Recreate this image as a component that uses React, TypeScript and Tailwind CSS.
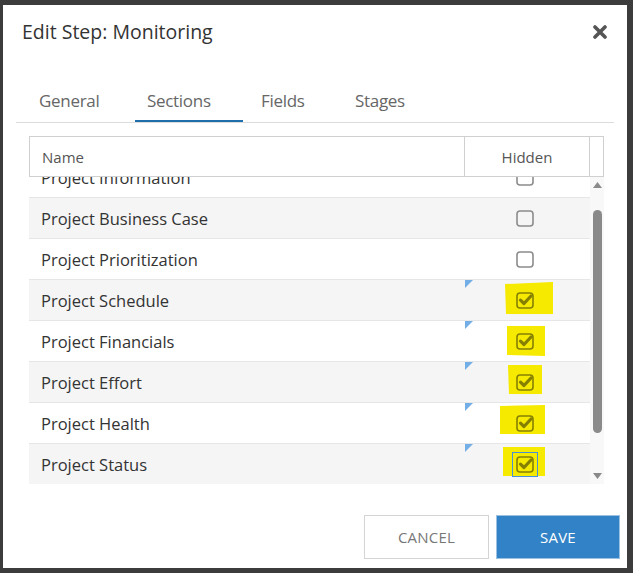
import { useState } from 'react'

const tabs = [
  { label: 'General', width: 'w-[108px]' },
  { label: 'Sections', width: 'w-[114px]' },
  { label: 'Fields', width: 'w-[94px]' },
  { label: 'Stages', width: 'w-[100px]' },
]

// highlight marks drawn over the checked boxes (cell-relative coords)
const rows = [
  { name: 'Project Information', checked: false },
  { name: 'Project Business Case', checked: false },
  { name: 'Project Prioritization', checked: false },
  { name: 'Project Schedule', checked: true, mark: '40,4 88,2 88,34 41,34' },
  { name: 'Project Financials', checked: true, mark: '42,5 80,5 80,35 42,34' },
  { name: 'Project Effort', checked: true, mark: '43,3 77,3 77,32 44,32' },
  { name: 'Project Health', checked: true, mark: '35,3 80,2 80,31 35,31' },
  { name: 'Project Status', checked: true, mark: '38,3 80,3 80,32 38,32', focus: true },
]

const CheckBox = ({ checked, focus }: { checked: boolean; focus?: boolean }) => (
  <div className={focus ? 'relative outline outline-1 outline-[#4a90d9] outline-offset-[3px]' : 'relative'}>
    <svg width="18" height="17" viewBox="0 0 18 17" className="block">
      <rect
        x="1"
        y="1"
        width="16"
        height="15"
        rx="3"
        fill="none"
        stroke={checked ? '#858000' : '#8c8c8c'}
        strokeWidth="1.6"
      />
      {checked && (
        <path d="M4.5 8.2 L8 11.5 L15 4" fill="none" stroke="#858000" strokeWidth="3.2" strokeLinecap="round" strokeLinejoin="round" />
      )}
    </svg>
  </div>
)

export default function App() {
  const [active, setActive] = useState(1)

  return (
    <div className="h-[573px] w-[633px] bg-[#3c3c3c] pb-[5px] pl-[3px] pr-[6px] pt-[5px] font-['Open_Sans',sans-serif]">
      <div className="flex h-full flex-col bg-white">
        <div className="flex h-[54px] items-center justify-between pl-[19px] pr-[20px]">
          <h1 className="text-[19.5px] text-[#333]">Edit Step: Monitoring</h1>
          <svg width="14" height="14" viewBox="0 0 14 14">
            <path d="M2 2 L12 12 M12 2 L2 12" stroke="#555" strokeWidth="3.6" strokeLinecap="round" />
          </svg>
        </div>

        <div className="mx-[13px] mt-[17px] flex h-[47px] border-b border-[#dcdcdc] pl-[11px]">
          {tabs.map((tab, i) => (
            <button
              key={tab.label}
              onClick={() => setActive(i)}
              className={`${tab.width} flex flex-col items-start`}
            >
              <span className="h-[45px] pl-[12px] pt-[12px] text-[17px] tracking-[-0.3px] text-[#666]">{tab.label}</span>
              {i === active && <span className="h-[2px] w-[108px] bg-[#1f6fab]" />}
            </button>
          ))}
        </div>

        <div className="ml-[26px] mr-[23px] mt-[13px] flex flex-col">
          <div className="flex h-[41px] border border-[#d0d0d0] text-[15px] text-[#555]">
            <div className="flex flex-1 items-center pl-[12px] pt-[1px]">Name</div>
            <div className="flex w-[125px] items-center justify-center border-l border-[#d0d0d0] pt-[1px]">Hidden</div>
            <div className="w-[14px] border-l border-[#d0d0d0]" />
          </div>

          <div className="flex h-[307px] overflow-hidden">
            <div className="flex-1 overflow-hidden">
              <div className="-mt-[21px]">
                {rows.map((row, i) => (
                  <div
                    key={row.name}
                    className={`flex h-[41px] border-t border-[#e6e6e6] ${i % 2 === 1 ? 'bg-[#f5f5f5]' : 'bg-white'}`}
                  >
                    <div className="flex flex-1 items-center pl-[12px] pt-[3px] text-[16.5px] text-[#333]">{row.name}</div>
                    <div className="relative flex w-[125px] items-center justify-center pr-[6px]">
                      {row.checked && (
                        <>
                          <svg className="absolute left-0 top-0" width="125" height="40">
                            <polygon points={row.mark} fill="#f6ea00" />
                          </svg>
                          <svg className="absolute left-0 top-0" width="8" height="8">
                            <polygon points="0,0 8,0 0,8" fill="#74aee6" />
                          </svg>
                        </>
                      )}
                      <CheckBox checked={row.checked} focus={row.focus} />
                    </div>
                  </div>
                ))}
              </div>
            </div>
            <div className="flex w-[14px] flex-col items-center bg-[#f8f8f8] pt-[5px]">
              <svg width="9" height="6" viewBox="0 0 9 6">
                <polygon points="4.5,0 9,6 0,6" fill="#8a8a8a" />
              </svg>
              <div className="mt-[22px] h-[223px] w-[9px] rounded-full bg-[#8a8a8a]" />
              <div className="flex-1" />
              <svg width="9" height="6" viewBox="0 0 9 6" className="mb-[5px]">
                <polygon points="0,0 9,0 4.5,6" fill="#8a8a8a" />
              </svg>
            </div>
          </div>
        </div>

        <div className="flex-1" />
        <div className="flex justify-end gap-[7px] pb-[9px] pr-[7px] text-[15px]">
          <button className="h-[44px] w-[125px] border border-[#d4d4d4] bg-white tracking-[0.2px] text-[#777]">CANCEL</button>
          <button className="h-[44px] w-[124px] border border-[#9cc0e0] bg-[#3182c6] tracking-[0.2px] text-white">SAVE</button>
        </div>
      </div>
    </div>
  )
}
